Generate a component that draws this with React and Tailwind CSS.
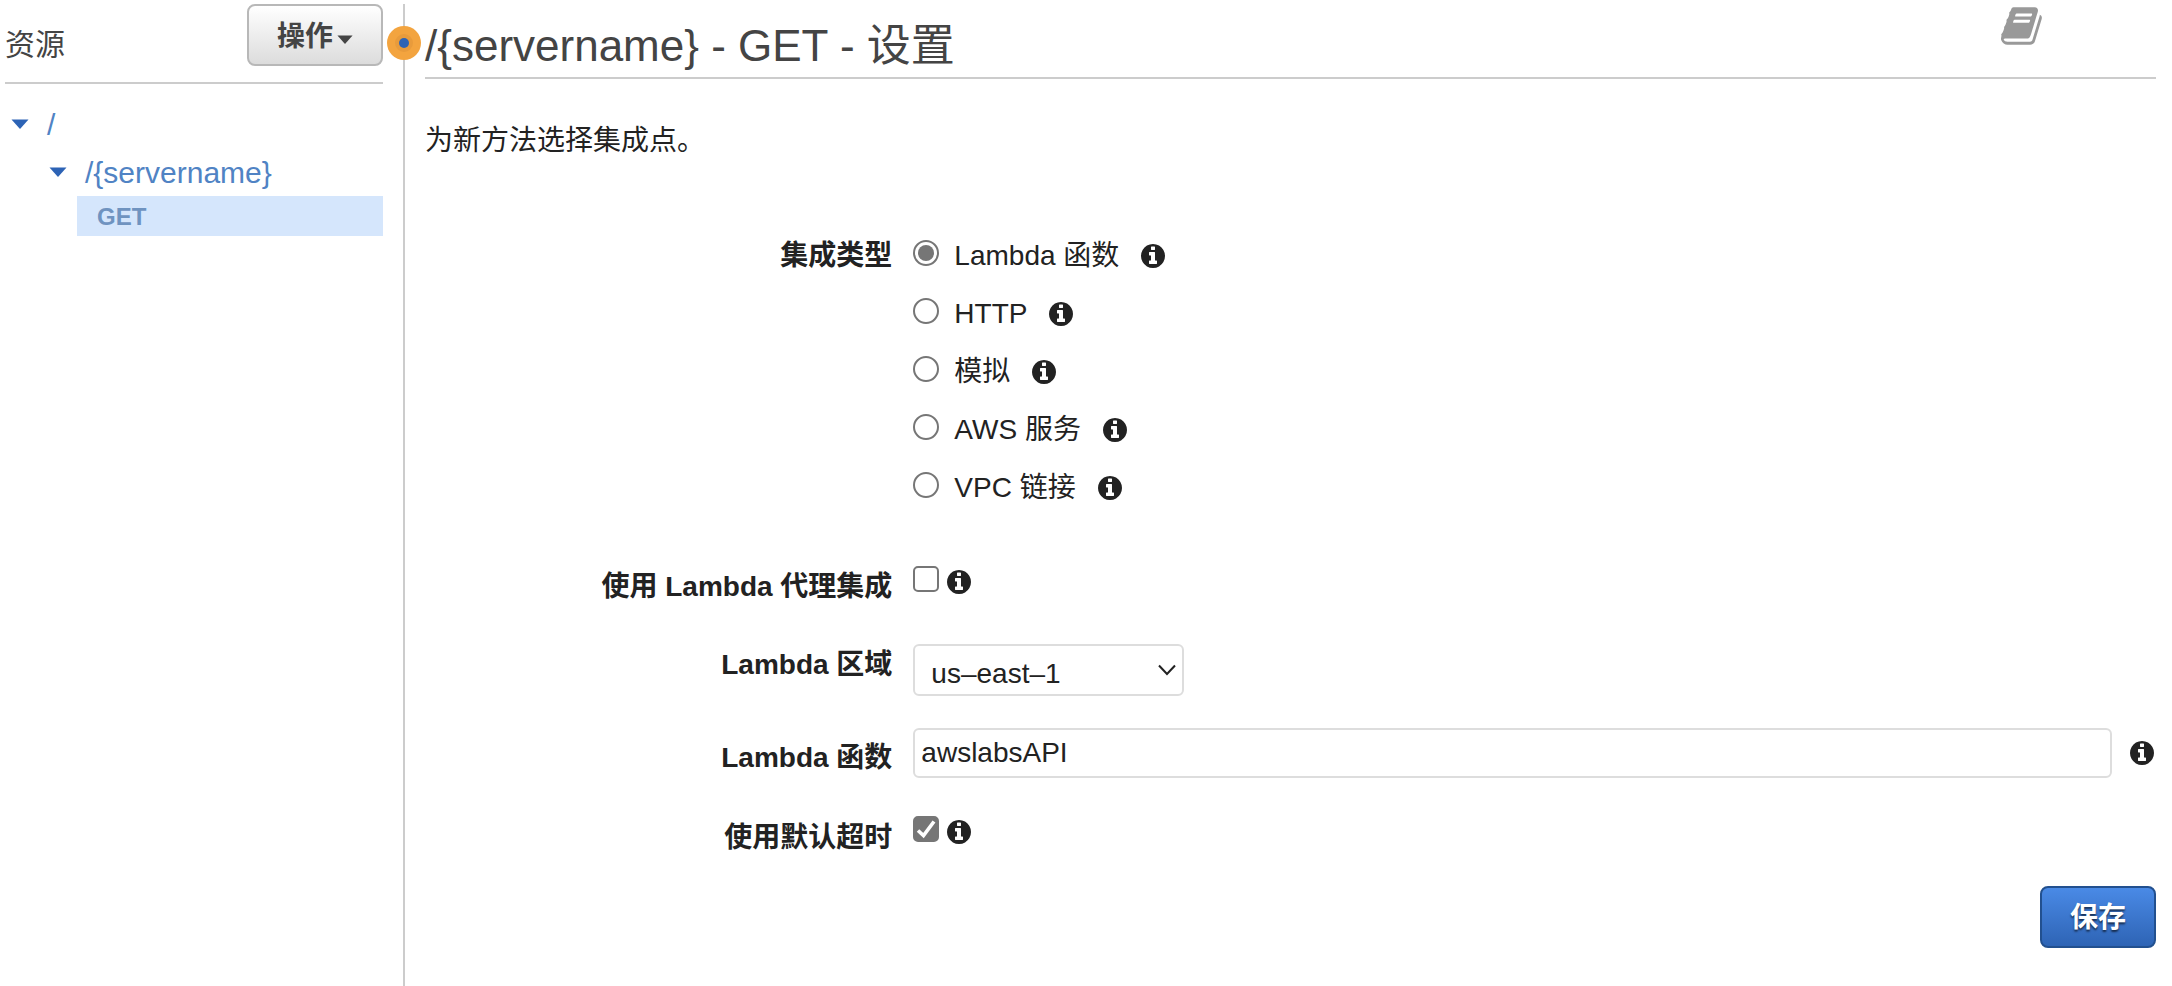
import React, { useState } from "react";

const INFO_PATH =
  "M1152 1376v-160q0-14-9-23t-23-9h-96v-512q0-14-9-23t-23-9h-320q-14 0-23 9t-9 23v160q0 14 9 23t23 9h96v320h-96q-14 0-23 9t-9 23v160q0 14 9 23t23 9h448q14 0 23-9t9-23zm-128-896v-160q0-14-9-23t-23-9h-192q-14 0-23 9t-9 23v160q0 14 9 23t23 9h192q14 0 23-9t9-23zm640 416q0 209-103 385.5t-279.5 279.5-385.5 103-385.5-103-279.5-279.5-103-385.5 103-385.5 279.5-279.5 385.5-103 385.5 103 279.5 279.5 103 385.5z";

const BOOK_PATH =
  "M1639 478q40 57 18 129l-275 906q-19 64-76.5 107.5t-122.5 43.5h-923q-77 0-148.5-53.5t-99.5-131.5q-24-67-2-127 0-4 3-27t4-37q1-8-3-21.5t-3-19.5q2-11 8-21t16.5-23.5 16.5-23.5q23-38 45-91.5t30-91.5q3-10 .5-30t-.5-28q3-11 17-28t17-23q21-36 42-92t25-90q1-9-2.5-32t.5-28q4-13 22-30.5t22-22.5q19-26 42.5-84.5t27.5-96.5q1-8-3-25.5t-2-26.5q2-8 9-18t18-23 17-21q8-12 16.5-30.5t15-35 16-36 19.5-32 26.5-23.5 36-11.5 47.5 5.5l-1 3q38-9 51-9h761q74 0 114 56t18 130l-274 906q-36 119-71.5 153.5t-128.5 34.5h-869q-27 0-38 15-11 16-1 43 24 70 144 70h923q29 0 56-15.5t35-41.5l300-987q7-22 5-57 38 15 59 43zm-1064 2q-4 13 2 22.5t20 9.5h608q13 0 25.5-9.5t16.5-22.5l21-64q4-13-2-22.5t-20-9.5h-608q-13 0-25.5 9.5t-16.5 22.5zm-83 256q-4 13 2 22.5t20 9.5h608q13 0 25.5-9.5t16.5-22.5l21-64q4-13-2-22.5t-20-9.5h-608q-13 0-25.5 9.5t-16.5 22.5z";

const TYPES = ["Lambda 函数", "HTTP", "模拟", "AWS 服务", "VPC 链接"];

function InfoIcon() {
  return (
    <svg viewBox="0 0 1792 1792" className="size-7 shrink-0 fill-[#222]" aria-hidden="true">
      <path d={INFO_PATH} />
    </svg>
  );
}

function Caret({ className }) {
  return (
    <svg viewBox="0 0 18 10" className={className} aria-hidden="true">
      <path d="M0.5 0.5h17L9 10z" />
    </svg>
  );
}

function Field({ label, htmlFor, id, labelClass, className, children }) {
  const text = "w-[27%] shrink-0 text-right font-bold leading-8 " + labelClass;
  return (
    <div className={"flex items-start gap-[21px] " + className}>
      {htmlFor ? (
        <label htmlFor={htmlFor} className={text}>{label}</label>
      ) : (
        <div id={id} className={text}>{label}</div>
      )}
      {children}
    </div>
  );
}

function Checkbox({ id, checked, onChange }) {
  return (
    <div className="flex items-start gap-1.5">
      <span className="grid">
        <input
          id={id}
          type="checkbox"
          checked={checked}
          onChange={(e) => onChange(e.target.checked)}
          className="col-start-1 row-start-1 size-[26px] appearance-none rounded-[5px] border-2 border-[#767676] bg-white checked:bg-[#767676]"
        />
        {checked && (
          <svg viewBox="0 0 26 26" className="pointer-events-none col-start-1 row-start-1 size-[26px]" aria-hidden="true">
            <path d="M5 14.5l5.500 5L21 5.500" fill="none" stroke="#fff" strokeWidth="3.6" />
          </svg>
        )}
      </span>
      <span className="pt-0.5">
        <InfoIcon />
      </span>
    </div>
  );
}

function Sidebar() {
  return (
    <aside className="w-[403px] shrink-0 pl-[5px] pr-5 pt-1">
      <div className="flex h-20 items-start justify-between border-b-2 border-[#ccc]">
        <h2 className="pt-[21px] text-[30px] leading-10 text-[#444]">资源</h2>
        <button
          type="button"
          className="flex h-[62px] w-[136px] items-center justify-center gap-1 rounded-lg border-2 border-[#b8b8b8] bg-linear-to-b from-white to-[#dcdcdc] font-bold text-[#444]"
        >
          <span className="pt-1 leading-8">操作</span>
          <Caret className="mt-2 h-[9px] w-4 fill-[#444]" />
        </button>
      </div>
      <nav className="pt-4 text-[30px] text-[#5083c4]">
        <div className="flex h-12 items-center gap-[18px] pl-1.5">
          <Caret className="h-2.5 w-[18px] fill-[#2d63b5]" />
          <a href="#root">/</a>
        </div>
        <div className="flex h-12 items-center gap-[18px] pl-11">
          <Caret className="h-2.5 w-[18px] fill-[#2d63b5]" />
          <a href="#servername">/{"{servername}"}</a>
        </div>
        <a
          href="#get"
          className="ml-[72px] flex h-10 items-center bg-[#d5e6fc] pl-5 pt-0.5 text-2xl font-bold text-[#6f93c0]"
        >
          GET
        </a>
      </nav>
    </aside>
  );
}

export default function App() {
  const [type, setType] = useState(TYPES[0]);
  const [proxy, setProxy] = useState(false);
  const [timeout, setDefaultTimeout] = useState(true);
  const [fn, setFn] = useState("awslabsAPI");

  return (
    <div className="flex min-h-screen bg-white font-['Liberation_Sans','Noto_Sans_CJK_SC',sans-serif] text-[28px] text-[#222]">
      <Sidebar />
      <div className="relative mt-1 w-0.5 shrink-0 bg-[#ccc]">
        <svg viewBox="0 0 34 34" className="absolute -left-4 top-[22px] size-[34px]" aria-hidden="true">
          <circle cx="17" cy="17" r="17" fill="#f3a43f" />
          <circle cx="17" cy="17" r="9" fill="#e89b3c" />
          <circle cx="17" cy="17" r="5" fill="#2d63b5" />
        </svg>
      </div>
      <main className="min-w-0 grow pb-10 pl-5 pr-4">
        <header className="flex h-[79px] items-start justify-between border-b-2 border-[#ccc]">
          <h1 className="pt-4 text-[44px] leading-[60px] text-[#444]">/{"{servername}"} - GET - 设置</h1>
          <a href="#docs" aria-label="文档" className="mr-[111px] pt-1">
            <svg viewBox="0 0 1792 1792" className="size-11 fill-[#999]" aria-hidden="true">
              <path d={BOOK_PATH} />
            </svg>
          </a>
        </header>
        <p className="pt-[42px] leading-10">为新方法选择集成点。</p>

        <form onSubmit={(e) => e.preventDefault()}>
          <Field label="集成类型" id="type-label" labelClass="" className="pt-[79px]">
            <div role="radiogroup" aria-labelledby="type-label" className="flex flex-col gap-[26px]">
              {TYPES.map((name) => (
                <div key={name} className="flex h-8 items-center gap-5">
                  <label className="flex items-center gap-[15px]">
                    <input
                      type="radio"
                      name="type"
                      checked={type === name}
                      onChange={() => setType(name)}
                      className="mb-1.5 size-[26px] appearance-none rounded-full border-2 border-[#767676] bg-white checked:bg-[#767676] checked:bg-clip-content checked:p-[3px]"
                    />
                    <span className="leading-8">{name}</span>
                  </label>
                  <InfoIcon />
                </div>
              ))}
            </div>
          </Field>
          <Field label="使用 Lambda 代理集成" htmlFor="proxy" labelClass="pt-[5px]" className="pt-[62px]">
            <Checkbox id="proxy" checked={proxy} onChange={setProxy} />
          </Field>
          <Field label="Lambda 区域" htmlFor="region" labelClass="pt-[5px]" className="pt-[41px]">
            <div className="grid w-[271px]">
              <select
                id="region"
                className="col-start-1 row-start-1 h-[52px] appearance-none rounded-md border-2 border-[#ddd] bg-white pl-4 pr-10 pt-2 leading-9"
              >
                <option>us–east–1</option>
              </select>
              <svg viewBox="0 0 18 12" className="pointer-events-none col-start-1 row-start-1 mr-2 h-3 w-[18px] self-center justify-self-end" aria-hidden="true">
                <path d="M1 1.500l8 8.500 8-8.500" fill="none" stroke="#222" strokeWidth="2" />
              </svg>
            </div>
          </Field>
          <Field label="Lambda 函数" htmlFor="function" labelClass="pt-3.5" className="pt-8">
            <div className="flex grow items-center gap-4">
              <input
                id="function"
                type="text"
                value={fn}
                onChange={(e) => setFn(e.target.value)}
                className="h-[50px] min-w-0 grow rounded-md border-2 border-[#ddd] px-1.5"
              />
              <InfoIcon />
            </div>
          </Field>
          <Field label="使用默认超时" htmlFor="timeout" labelClass="pt-1.5" className="pt-[38px]">
            <Checkbox id="timeout" checked={timeout} onChange={setDefaultTimeout} />
          </Field>
          <div className="flex justify-end pt-8">
            <button
              type="submit"
              className="h-[62px] w-[116px] rounded-lg border-2 border-[#22508f] bg-linear-to-b from-[#4a8ae6] to-[#2e64b5] pt-0.5 font-bold text-white text-shadow-[0_2px_2px_rgba(0,0,0,0.6)]"
            >
              保存
            </button>
          </div>
        </form>
      </main>
    </div>
  );
}
